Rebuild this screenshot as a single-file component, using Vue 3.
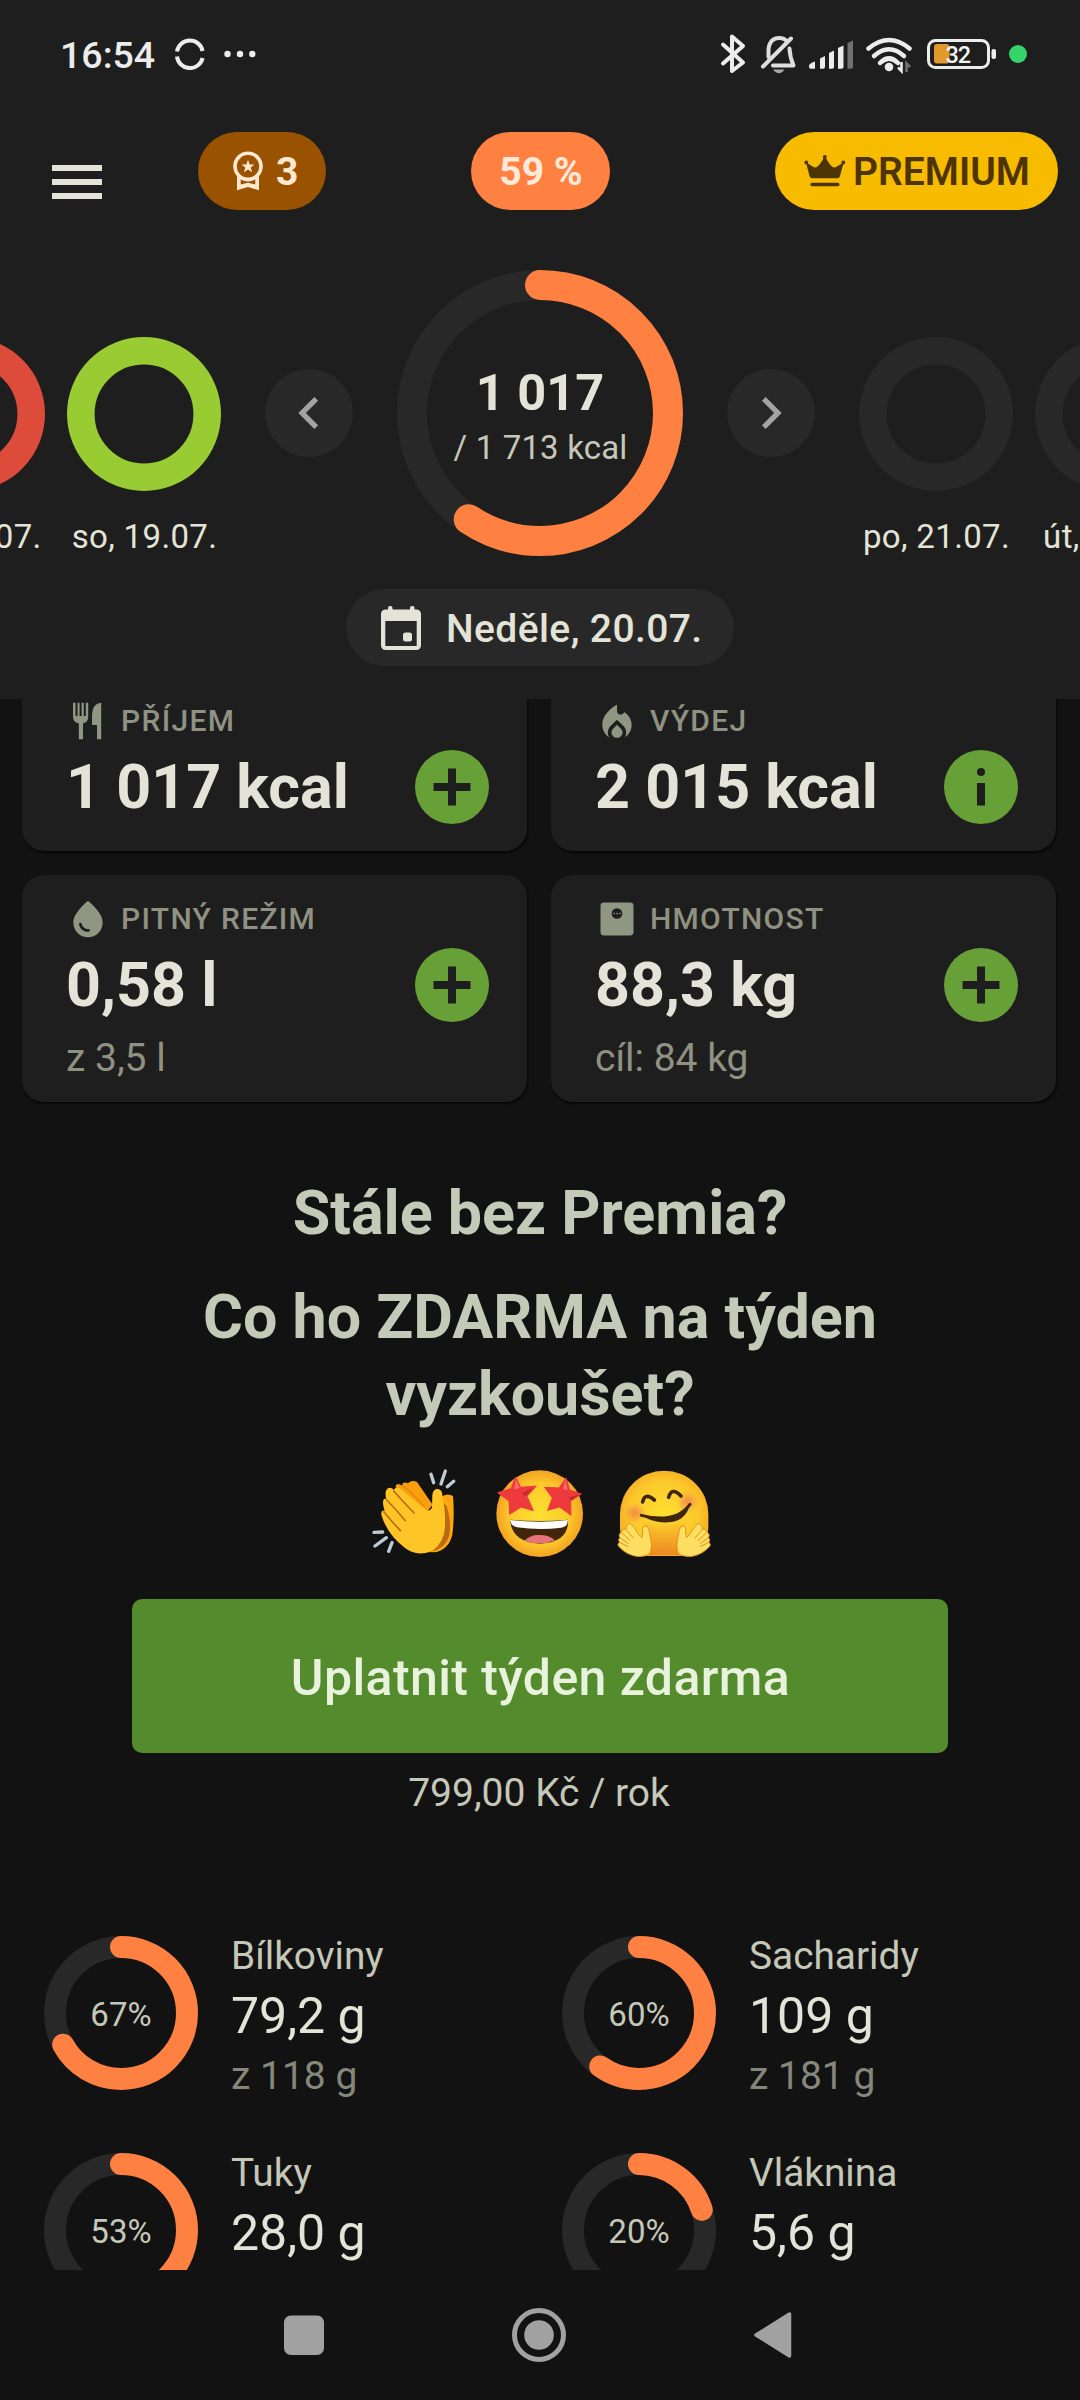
<script setup>
const pastDays = [
  { label: 'pá, 18.07.', color: '#dd4b3a' },
  { label: 'so, 19.07.', color: '#99cc33' },
]
const nextDays = [
  { label: 'po, 21.07.', color: '#282828' },
  { label: 'út, 22.07.', color: '#282828' },
]
const cards = [
  { icon: 'food', title: 'PŘÍJEM', value: '1 017 kcal', action: 'plus' },
  { icon: 'fire', title: 'VÝDEJ', value: '2 015 kcal', action: 'info' },
  { icon: 'drop', title: 'PITNÝ REŽIM', value: '0,58 l', sub: 'z 3,5 l', action: 'plus' },
  { icon: 'scale', title: 'HMOTNOST', value: '88,3 kg', sub: 'cíl: 84 kg', action: 'plus' },
]
const nutrients = [
  { name: 'Bílkoviny', pct: 67, value: '79,2 g', goal: 'z 118 g' },
  { name: 'Sacharidy', pct: 60, value: '109 g', goal: 'z 181 g' },
  { name: 'Tuky', pct: 53, value: '28,0 g' },
  { name: 'Vláknina', pct: 20, value: '5,6 g' },
]
</script>

<template>
  <div class="screen">
    <header class="header">
      <div class="status">
        <span class="clock">16:54</span>
        <svg class="sync" width="32" height="32" viewBox="0 0 32 32" fill="none" stroke="#ececec" stroke-width="4">
          <path d="M3 13.5A13 13 0 0 1 28.6 13" />
          <path d="M3 18.5A13 13 0 0 0 28.6 20" />
        </svg>
        <svg class="dots" width="32" height="8" viewBox="0 0 32 8" fill="#ececec">
          <circle cx="3.5" cy="4" r="3.2" /><circle cx="16" cy="4" r="3.2" /><circle cx="28.3" cy="4" r="3.2" />
        </svg>
        <svg class="tray" width="310" height="44" viewBox="718 32 310 44">
          <path d="M723 44.5L743 62.5L732 71V36.5L743 46L723 63.5" fill="none" stroke="#ececec" stroke-width="4" stroke-linecap="round" stroke-linejoin="round" />
          <g fill="none" stroke="#dedede" stroke-width="4" stroke-linecap="round" stroke-linejoin="round">
            <path d="M768.5 57V50C769 41 774 37.500 780 38C782.500 38.200 784.500 39 786 40.200" />
            <path d="M789.500 48.500C790 57 791.500 61 793.500 65.500H773" />
            <path d="M763 66.500L791 38.500" />
          </g>
          <path d="M773 69.500H784.500Q779 77 773 69.500Z" fill="#a8a8a8" />
          <g fill="#ececec">
            <path d="M809 67V65.500Q810 63 815 61.500V68.800H811Q809 68.800 809 67Z" />
            <path d="M820 58.500L825 56V67Q825 68.800 823 68.800H820Z" />
            <path d="M829 53L834 50.500V67Q834 68.800 832 68.800H829Z" />
            <path d="M838 48L843.500 45.500V67Q843.500 68.800 841.500 68.800H838Z" />
          </g>
          <path d="M847.500 43L853 40.500V67Q853 68.800 851 68.800H847.500Z" fill="#707070" />
          <g fill="none" stroke="#ececec" stroke-width="4.500" stroke-linecap="round">
            <path d="M868.500 48.500Q889 31.500 909.500 48.500" />
            <path d="M874 56Q889 42.500 904 56" />
            <path d="M880 63Q889 54 898 63" />
          </g>
          <circle cx="889" cy="67" r="4.300" fill="#ececec" />
          <path d="M901.500 62V71L898 67.500" fill="none" stroke="#ececec" stroke-width="2.600" />
          <path d="M906.500 72V63.500L910 67" fill="none" stroke="#707070" stroke-width="2.600" />
          <rect x="928.500" y="40.500" width="60" height="27" rx="7" fill="none" stroke="#ececec" stroke-width="3" />
          <rect x="934" y="44" width="15.500" height="19.500" rx="3" fill="#e0992a" />
          <rect x="991.500" y="49" width="4.500" height="10" rx="2" fill="#ececec" />
          <text x="945.500" y="62.500" font-size="23.500" font-weight="500" fill="#f2f2f2" textLength="25.500">32</text>
          <circle cx="1018" cy="54" r="9" fill="#34d469" />
        </svg>
      </div>

      <div class="appbar">
        <div class="menu"><i></i><i></i><i></i></div>
        <div class="pill streak">
          <svg width="34" height="40" viewBox="231 150 34 40">
            <circle cx="248" cy="165.300" r="13" fill="none" stroke="#ffe9d1" stroke-width="3.600" />
            <path d="M248 158.800L249.700 163.400L254.400 163.500L250.700 166.500L252 171.200L248 168.500L244 171.200L245.300 166.500L241.600 163.500L246.300 163.400Z" fill="#ffe9d1" />
            <path fill-rule="evenodd" d="M237 174.500L241 177.300Q248 181 255 177.300L259 174.500V189.300L248 186L237 189.300ZM240.700 178.300V183.600L248 181.800L255.300 183.600V178.300Q248 182.800 240.700 178.300Z" fill="#ffe9d1" />
          </svg>
          <span>3</span>
        </div>
        <div class="pill percent">59 %</div>
        <div class="pill premium">
          <svg width="42" height="34" viewBox="804 152 42 34" fill="#4d3400">
            <circle cx="806.300" cy="160.500" r="1.900" /><circle cx="824.800" cy="154.800" r="1.900" /><circle cx="843.300" cy="160.500" r="1.900" />
            <path d="M806 160.500L813.500 165Q815.500 166 817.500 164.500Q820.500 162 824.200 155H825.400Q829 162 832 164.500Q834 166 836 165L843.700 160.500L840 174Q839.500 176.300 837.500 176.300H812Q810 176.300 809.500 174Z" />
            <rect x="810.300" y="180.700" width="29.200" height="3.500" rx="1.700" />
          </svg>
          <span>PREMIUM</span>
        </div>
      </div>

      <div class="carousel">
        <div v-for="d in pastDays" :key="d.label" class="day">
          <svg width="154" height="154"><circle cx="77" cy="77" r="63.200" fill="none" :stroke="d.color" stroke-width="27.600" /></svg>
          <span>{{ d.label }}</span>
        </div>
        <div class="arrow after">
          <svg width="64" height="64" viewBox="0 0 24 24" fill="#a3a3a3"><path d="M15.410 7.410L14 6l-6 6 6 6 1.410-1.410L10.830 12z" /></svg>
        </div>
        <div class="today">
          <svg width="286" height="286">
            <circle cx="143" cy="143" r="128" fill="none" stroke="#282828" stroke-width="30" />
            <circle cx="143" cy="143" r="128" fill="none" stroke="#ff8142" stroke-width="30" stroke-linecap="round" pathLength="1000" stroke-dasharray="594 1000" transform="rotate(-90 143 143)" />
          </svg>
          <div class="today-text">
            <b>1 017</b>
            <span>/ 1 713 kcal</span>
          </div>
        </div>
        <div class="arrow before">
          <svg width="64" height="64" viewBox="0 0 24 24" fill="#a3a3a3"><path d="M8.590 16.590L10 18l6-6-6-6-1.410 1.410L13.170 12z" /></svg>
        </div>
        <div v-for="d in nextDays" :key="d.label" class="day">
          <svg width="154" height="154"><circle cx="77" cy="77" r="63.200" fill="none" :stroke="d.color" stroke-width="27.600" /></svg>
          <span>{{ d.label }}</span>
        </div>
      </div>

      <div class="date">
        <svg width="42" height="46" viewBox="0 0 42 46" fill="#e3e4d7">
          <path fill-rule="evenodd" d="M6 4.500H36Q41 4.500 41 9.500V40Q41 45 36 45H6Q1 45 1 40V9.500Q1 4.500 6 4.500ZM5.300 16V41H36.700V16Z" />
          <rect x="8" y="1" width="4.500" height="7" rx="2" /><rect x="30" y="1" width="4.500" height="7" rx="2" />
          <rect x="23" y="27.500" width="9" height="9" rx="2.500" />
        </svg>
        <span>Neděle, 20.07.</span>
      </div>
    </header>

    <main class="content">
      <section class="cards">
        <article v-for="c in cards" :key="c.title" class="card">
          <div class="card-head">
            <svg v-if="c.icon === 'food'" width="44" height="44" viewBox="0 0 44 44">
              <path d="M7 3.700H9.500V17H11.500V3.700H13.600V17H15.600V3.700H17.800V17H19.800V3.700H22.200V18Q22.200 23 17 24.500V40.200H12.800V24.500Q7 23 7 18ZM35.200 3.700V40.200H31V26H26V15Q26.500 4.500 35.200 3.700Z" />
            </svg>
            <svg v-else-if="c.icon === 'fire'" width="44" height="44" viewBox="0 -1.200 24 24">
              <path d="M12 12.900l-2.130 2.090C9.310 15.550 9 16.280 9 17.060 9 18.680 10.350 20 12 20s3-1.320 3-2.940c0-.78-.31-1.520-.87-2.070L12 12.900z" />
              <path d="M16 6l-.44.55C14.380 8.020 12 7.190 12 5.300V2S4 6 4 13c0 2.920 1.560 5.470 3.890 6.860-.56-.79-.89-1.760-.89-2.800 0-1.320.52-2.560 1.470-3.500L12 10.100l3.530 3.470c.95.93 1.470 2.170 1.470 3.500 0 1.020-.31 1.960-.85 2.750 1.890-1.150 3.290-3.060 3.710-5.300.66-3.550-1.070-6.900-3.860-8.520z" />
            </svg>
            <svg v-else-if="c.icon === 'drop'" width="44" height="44" viewBox="0 0 24 24">
              <path d="M12 2c-5.330 4.550-8 8.480-8 11.800 0 4.980 3.800 8.200 8 8.200s8-3.220 8-8.200c0-3.320-2.670-7.250-8-11.800zM7.830 14c.37 0 .67.26.74.62.41 2.220 2.280 2.980 3.640 2.870.43-.02.79.32.79.75 0 .4-.32.73-.72.75-2.130.13-4.620-1.090-5.190-4.120-.08-.45.28-.87.74-.87z" />
            </svg>
            <svg v-else width="44" height="44" viewBox="0 0 24 24">
              <rect x="3" y="3" width="18" height="18" rx="1.900" />
              <circle cx="12" cy="9" r="2.900" fill="#1e1e1e" />
              <rect x="10" y="8.600" width=".8" height=".8" /><rect x="11.600" y="8.600" width=".8" height=".8" /><rect x="13.200" y="8.600" width=".8" height=".8" />
            </svg>
            <span>{{ c.title }}</span>
          </div>
          <div class="card-main">
            <b>{{ c.value }}</b>
            <div class="action">
              <svg width="74" height="74" viewBox="0 0 74 74" fill="#1e1e1e">
                <path v-if="c.action === 'plus'" d="M33 18.500H41V33H55.500V41H41V55.500H33V41H18.500V33H33Z" />
                <template v-else><circle cx="37" cy="22" r="4" /><rect x="33" y="33" width="8" height="22.500" /></template>
              </svg>
            </div>
          </div>
          <div v-if="c.sub" class="card-sub">{{ c.sub }}</div>
        </article>
      </section>

      <section class="promo">
        <h2>Stále bez Premia?</h2>
        <h2 class="second">Co ho ZDARMA na týden vyzkoušet?</h2>
        <div class="emojis">
          <svg width="90" height="90" viewBox="60 85 270 270">
            <g stroke="#bccbd6" stroke-width="10" stroke-linecap="round">
              <path d="M243 104L251 129M286 94L273 133M311 125L292 141M72 278L98 277M75 319L109 294M126 309L116 335" />
            </g>
            <path d="M136 140Q143 127 156 138Q158 124 174 131Q186 119 201 127L248 195L220 230Z" fill="#f99f0b" />
            <path d="M272 172Q292 158 309 169Q314 230 307 285Q296 331 252 338L200 336Z" fill="#ffa50d" />
            <path d="M281 190Q290 240 280 288Q265 322 225 338Q282 336 297 289Q306 250 290 200Z" fill="#b86b14" />
            <path d="M109 151Q118 138 132 150Q139 136 153 148L218 203Q236 221 246 204L247 165Q250 147 264 148Q278 151 277 169Q286 218 285 257Q284 307 248 333Q201 353 164 324Q112 285 94 225Q93 211 104 213Q95 187 102 178L109 177Q104 160 109 151Z" fill="#ffc526" />
            <path d="M131 154Q160 187 192 220M110 181Q137 208 166 243M102 217Q125 245 151 273" fill="none" stroke="#b86b14" stroke-width="5" stroke-linecap="round" />
            <path d="M156 138Q181 153 222 200" fill="none" stroke="#cc7713" stroke-width="3" />
          </svg>
          <svg width="90" height="90" viewBox="435 85 270 270">
            <defs>
              <radialGradient id="face"><stop offset="0" stop-color="#fde030" /><stop offset=".7" stop-color="#fcc92b" /><stop offset="1" stop-color="#f4a223" /></radialGradient>
            </defs>
            <circle cx="572" cy="222" r="130" fill="url(#face)" />
            <path d="M483 240Q572 248 657 240Q661 308 572 312Q488 308 483 240Z" fill="#40270c" />
            <path d="M526 303Q546 284 572 286Q600 286 618 302Q574 320 526 303Z" fill="#e8717b" />
            <path d="M483 241Q571 251 657 241Q656 262 636 264Q572 272 504 263Q486 260 483 241Z" fill="#fff" />
            <path d="M500 112L515 143L562 139L534 170L553 213L516 202L482 224L480 184L446 159L486 147Z" fill="#ee3a3c" stroke="#ee3a3c" stroke-width="3" stroke-linejoin="round" />
            <path d="M651 115L662 151L697 163L665 184L666 227L632 202L596 212L610 175L587 143L630 145Z" fill="#ee3a3c" stroke="#ee3a3c" stroke-width="3" stroke-linejoin="round" />
            <path d="M501 118L512 145L496 149ZM649 120L656 151L642 148Z" fill="#ff6d72" />
            <path d="M555 141L530 169L518 162ZM695 163L667 181L658 174Z" fill="#c9282e" />
          </svg>
          <svg width="90" height="90" viewBox="808 85 270 270">
            <defs>
              <radialGradient id="blush"><stop offset="0" stop-color="#f06a5c" stop-opacity=".65" /><stop offset="1" stop-color="#f06a5c" stop-opacity="0" /></radialGradient>
              <linearGradient id="chin" x1="0" y1="0" x2="0" y2="1"><stop offset="0" stop-color="#ee8b22" stop-opacity="0" /><stop offset="1" stop-color="#ee8b22" /></linearGradient>
              <radialGradient id="head"><stop offset="0" stop-color="#fde030" /><stop offset=".75" stop-color="#fcc92b" /><stop offset="1" stop-color="#f8b326" /></radialGradient>
            </defs>
            <path d="M811 224A132.500 131 0 0 1 1076 224V266Q1070 348 992 349H892Q815 348 811 266Z" fill="url(#head)" />
            <path d="M878 235H1008V347H878Z" fill="url(#chin)" />
            <circle cx="856" cy="220" r="32" fill="url(#blush)" /><circle cx="1014" cy="187" r="34" fill="url(#blush)" />
            <path d="M879 187Q885 157 914 181M957 173Q966 140 994 169" fill="none" stroke="#40270c" stroke-width="11" stroke-linecap="round" />
            <path d="M875 227Q976 254 1021 194" fill="none" stroke="#40270c" stroke-width="9" stroke-linecap="round" />
            <path d="M880 230Q976 253 1019 198Q1010 238 966 247Q916 253 880 230Z" fill="#40270c" />
            <g id="hugHand" fill="#ffdf61" stroke="#e19520" stroke-width="3" stroke-linejoin="round">
              <path d="M877 294Q880 279 879 266Q883 254 893 260Q899 268 902 292Q909 323 901 340Q890 352 860 350Q829 344 810 323Q800 314 810 308Q803 300 811 294Q804 283 817 277Q817 265 829 270Q830 250 842 252Q855 260 866 283Z" />
              <path d="M830 271L852 296M817 280L842 303M811 295L837 312M811 309L836 321" fill="none" />
            </g>
            <use href="#hugHand" transform="translate(1887 0) scale(-1 1)" />
          </svg>
        </div>
        <button class="cta">Uplatnit týden zdarma</button>
        <div class="price">799,00 Kč / rok</div>
      </section>

      <section class="nutrients">
        <div v-for="n in nutrients" :key="n.name" class="nutrient">
          <div class="ring">
            <svg width="154" height="154">
              <circle cx="77" cy="77" r="66" fill="none" stroke="#282828" stroke-width="22" />
              <circle cx="77" cy="77" r="66" fill="none" stroke="#ff8142" stroke-width="22" stroke-linecap="round" pathLength="100" :stroke-dasharray="n.pct + ' 100'" transform="rotate(-90 77 77)" />
            </svg>
            <span>{{ n.pct }}%</span>
          </div>
          <div class="amounts">
            <div class="name">{{ n.name }}</div>
            <div class="value">{{ n.value }}</div>
            <div v-if="n.goal" class="goal">{{ n.goal }}</div>
          </div>
        </div>
      </section>
    </main>

    <nav class="nav">
      <svg width="512" height="56" viewBox="282 2307 512 56" fill="#a1a1a1">
        <rect x="284" y="2315.500" width="40" height="39.500" rx="7" />
        <circle cx="539" cy="2335" r="24.500" fill="none" stroke="#a1a1a1" stroke-width="5" />
        <circle cx="539" cy="2335" r="14.800" />
        <path d="M756 2335L789.500 2314V2356Z" stroke="#a1a1a1" stroke-width="3.500" stroke-linejoin="round" />
      </svg>
    </nav>
  </div>
</template>

<style>
body { background: #121212; }
</style>

<style scoped>
.screen {
  width: 1080px;
  height: 2400px;
  display: flex;
  flex-direction: column;
  overflow: hidden;
  background: #121212;
  color: #e3e4d7;
  font-family: Roboto, sans-serif;
  white-space: nowrap;
}
svg { display: block; flex: none; }

.header {
  flex: none;
  height: 699px;
  background: #1e1e1e;
  display: flex;
  flex-direction: column;
}
.status {
  height: 108px;
  display: flex;
  align-items: center;
  padding-left: 60px;
}
.clock { width: 114px; font-size: 37.5px; font-weight: 500; line-height: 46px; color: #ececec; margin-top: 1px; }
.dots { margin-left: 18px; }
.tray { margin-left: 462px; }

.appbar {
  height: 78px;
  margin-top: 24px;
  padding-left: 52px;
  display: flex;
}
.menu { width: 50px; margin-top: 33px; display: flex; flex-direction: column; gap: 8px; }
.menu i { height: 6px; background: #e3e4d7; }
.pill {
  box-sizing: border-box;
  height: 78px;
  border-radius: 39px;
  display: flex;
  align-items: center;
  font-size: 39px;
  font-weight: 700;
}
.pill span { padding-top: 1px; }
.streak { width: 128px; margin-left: 96px; padding-left: 33px; gap: 11px; background: #995200; color: #ffe9d1; }
.percent { width: 139px; margin-left: 145px; padding: 1px 0 0 1px; justify-content: center; background: #ff8142; color: #ffead9; }
.premium { width: 283px; margin-left: 165px; padding-left: 29px; gap: 7px; background: #f7bc00; color: #4d3400; font-weight: 600; }

.carousel {
  margin: 60px 0 0 -109px;
  height: 286px;
  display: flex;
  gap: 22px;
}
.day { flex: none; width: 154px; padding-top: 67px; display: flex; flex-direction: column; align-items: center; }
.day span { margin: 26px 0 0 1px; font-size: 33px; line-height: 40px; letter-spacing: 0.35px; }
.arrow {
  flex: none;
  width: 88px;
  height: 88px;
  margin: 99px 22px;
  border-radius: 50%;
  background: #282828;
  display: grid;
  place-items: center;
}
.today { flex: none; width: 286px; display: grid; }
.today > * { grid-area: 1 / 1; }
.today-text { padding-top: 93px; display: flex; flex-direction: column; align-items: center; }
.today-text b { font-size: 50.5px; line-height: 60px; font-weight: 700; }
.today-text span { margin: 5px 0 0 1px; font-size: 33px; line-height: 40px; letter-spacing: 0.15px; color: #c5c8b8; }

.date {
  align-self: center;
  box-sizing: border-box;
  width: 388px;
  height: 77px;
  margin-top: 33px;
  padding-left: 34px;
  border-radius: 39px;
  background: #282828;
  display: flex;
  align-items: center;
  gap: 24px;
  font-size: 39px;
  font-weight: 500;
  letter-spacing: 0.4px;
}
.date span { padding-top: 3px; }

.content { flex: none; height: 1571px; overflow: hidden; }
.cards {
  margin-top: -22px;
  padding: 0 24px 0 22px;
  display: grid;
  grid-template-columns: 505px 505px;
  grid-template-rows: 174px 227px;
  gap: 24px;
}
.card {
  box-sizing: border-box;
  padding: 22px 38px 0 44px;
  border-radius: 22px;
  background: #1e1e1e;
  box-shadow: 1px 2px 2px #070707;
}
.card-head { display: flex; align-items: center; gap: 11px; height: 44px; color: #8f9282; font-size: 30px; font-weight: 500; letter-spacing: 1.3px; }
.card-head span { padding-bottom: 2px; }
.card-head svg { fill: #8f9682; }
.card-main { margin-top: 8px; height: 72px; display: flex; align-items: center; justify-content: space-between; }
.card-main b { font-size: 61px; line-height: 72px; font-weight: 700; }
.action { width: 74px; height: 74px; border-radius: 50%; background: #68a038; }
.card-sub { margin-top: 14px; font-size: 39px; line-height: 46px; color: #8f9282; }

.promo { display: flex; flex-direction: column; align-items: center; padding-top: 73px; }
h2 { margin: 0; width: 760px; text-align: center; white-space: normal; font-size: 61px; line-height: 77px; font-weight: 700; color: #c5c9b7; }
.second { margin-top: 27px; }
.emojis { margin: 35px 2px 0 0; display: flex; gap: 34.500px; }
.emojis svg { overflow: visible; }
.cta {
  width: 816px;
  height: 154px;
  margin-top: 41px;
  padding: 4px 0 0 1px;
  border: 0;
  border-radius: 10px;
  background: #538b2d;
  color: #e8f2dd;
  font: 500 50px Roboto, sans-serif;
  letter-spacing: 0.4px;
}
.price { margin: 17px 2px 0 0; font-size: 39px; line-height: 46px; color: #c5c8b8; }

.nutrients {
  margin-top: 120px;
  padding-left: 44px;
  display: grid;
  grid-template-columns: 518px 518px;
  grid-auto-rows: 217px;
}
.nutrient { display: flex; }
.ring { width: 154px; height: 154px; display: grid; place-items: center; }
.ring > * { grid-area: 1 / 1; }
.ring span { font-size: 33px; line-height: 40px; padding-top: 4px; color: #c5c8b8; }
.amounts { margin: -3px 0 0 33px; }
.name { font-size: 38.8px; line-height: 46px; color: #c5c8b8; }
.value { margin-top: 7px; font-size: 50px; line-height: 60px; }
.goal { margin-top: 7px; font-size: 39px; line-height: 46px; color: #85877a; }

.nav { height: 130px; padding: 37px 0 0 282px; box-sizing: border-box; }
</style>
